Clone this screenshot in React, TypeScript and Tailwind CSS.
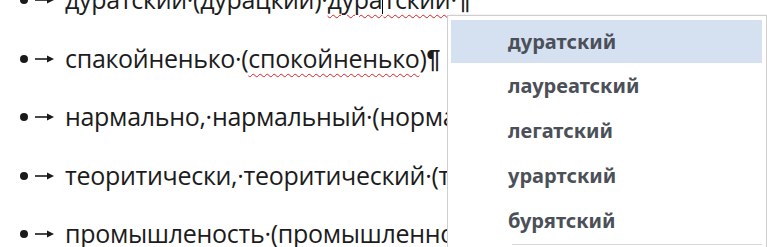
import React from 'react';

const docFont = { fontFamily: '"Open Sans", "Noto Sans", sans-serif' };

function Bullet() {
  return (
    <span className="inline-flex items-center w-[65px] shrink-0 pl-[20px]">
      <span className="w-[8px] h-[8px] rounded-full bg-[#1a1a1a]" />
      <svg width="22" height="10" viewBox="0 0 22 10" className="ml-[6px]">
        <line x1="1" y1="5" x2="17" y2="5" stroke="#1a1a1a" strokeWidth="1.6" />
        <path d="M13 1.5 L20 5 L13 8.5 Z" fill="#1a1a1a" />
      </svg>
    </span>
  );
}

const Pilcrow = () => (
  <span className="font-bold" style={{ fontFamily: '"Liberation Sans", sans-serif' }}>
    ¶
  </span>
);

const Squiggle: React.FC<{ children: React.ReactNode }> = ({ children }) => (
  <span className="underline decoration-wavy decoration-[#e02020] decoration-1 underline-offset-[5px]">
    {children}
  </span>
);

function Line({ children }: { children: React.ReactNode }) {
  return (
    <div className="flex items-center h-[58.5px] whitespace-nowrap">
      <Bullet />
      <span>{children}</span>
    </div>
  );
}

const suggestions = ['дуратский', 'лауреатский', 'легатский', 'урартский', 'бурятский'];

export default function App() {
  return (
    <div className="relative w-[767px] h-[247px] overflow-hidden bg-white">
      <div className="-mt-[29px] text-[25px] tracking-[-0.3px] text-[#1c1c1c]" style={docFont}>
        <Line>
          дуратский·(дурацкий)·
          <Squiggle>
            дура<span className="inline-block w-px h-[24px] bg-black align-middle" />тский
          </Squiggle>
          ·<Pilcrow />
        </Line>
        <Line>
          спакойненько·(<Squiggle>спокойненько</Squiggle>)<Pilcrow />
        </Line>
        <Line>
          нармально,·нармальный·(нормально)<Pilcrow />
        </Line>
        <Line>
          теоритически,·теоритический·(теоретически)<Pilcrow />
        </Line>
        <Line>
          промышленость·(промышленность)<Pilcrow />
        </Line>
      </div>

      <div className="absolute left-[447px] top-[15px] w-[320px] h-[240px] border border-[#cfcfcf] bg-white pt-[4px] pl-[3px] pr-[4px] shadow-[2px_0_2px_rgba(0,0,0,0.15)]">
        <ul className="flex flex-col" style={{ fontFamily: '"Noto Sans", "Open Sans", sans-serif' }}>
          {suggestions.map((s, i) => (
            <li
              key={s}
              className={`flex items-center pl-[57px] text-[20px] font-bold text-[#4b5058] ${
                i === 0 ? 'h-[43px] bg-[#d5e1f1]' : 'h-[45px]'
              }`}
            >
              {s}
            </li>
          ))}
        </ul>
        <div className="ml-[61px] mt-[1px] h-px bg-[#d8d8d8]" />
      </div>
    </div>
  );
}
